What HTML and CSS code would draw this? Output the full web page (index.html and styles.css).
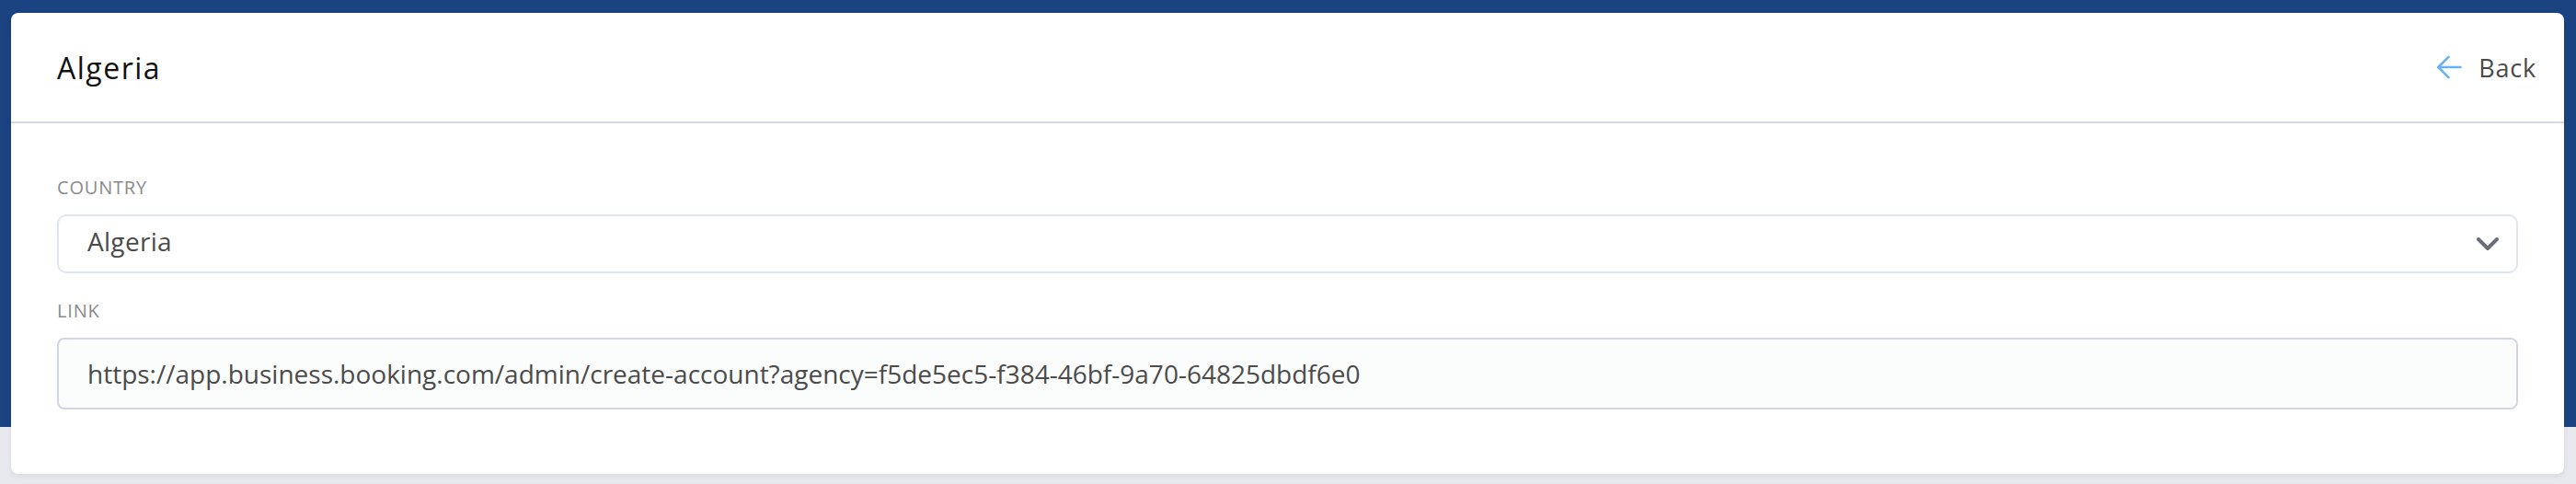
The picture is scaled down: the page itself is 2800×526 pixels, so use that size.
FILE: index.html
```html
<!DOCTYPE html>
<html lang="en">
<head>
<meta charset="utf-8">
<title>Algeria</title>
<link rel="stylesheet" href="styles.css">
</head>
<body>
<div class="page">
  <div class="card">
    <div class="card-header">
      <h1 class="title">Algeria</h1>
      <a class="back" href="#">
        <svg class="back-icon" width="28" height="26" viewBox="0 0 28 26" fill="none" stroke="#68b2f7" stroke-width="2.6" stroke-linecap="round" stroke-linejoin="round"><path d="M26.5 13H2.5M13.5 1.8L2.3 13l11.2 11.2"/></svg>
        <span class="back-text">Back</span>
      </a>
    </div>
    <div class="card-body">
      <div class="field">
        <div class="label">COUNTRY</div>
        <div class="select">
          <span class="select-value">Algeria</span>
          <svg class="chevron" width="26" height="17" viewBox="0 0 26 17" fill="none" stroke="#6b6e76" stroke-width="4" stroke-linecap="round" stroke-linejoin="round"><path d="M3 3l10 10 10-10"/></svg>
        </div>
      </div>
      <div class="field field-link">
        <div class="label">LINK</div>
        <div class="input">https://app.business.booking.com/admin/create-account?agency=f5de5ec5-f384-46bf-9a70-64825dbdf6e0</div>
      </div>
    </div>
  </div>
</div>
</body>
</html>
```

FILE: styles.css
```css
* { box-sizing: border-box; }
html, body { margin: 0; padding: 0; }
body {
  font-family: "Open Sans", "Liberation Sans", sans-serif;
  background: #e8e9ee;
}
.page {
  width: 2800px;
  height: 526px;
  padding: 14px 13px 0 12px;
  background: linear-gradient(to bottom, #1b4381 0, #1b4381 464px, #e8e9ee 464px, #e8e9ee 100%);
}
.card {
  background: #ffffff;
  border-radius: 8px;
  height: 501px;
  box-shadow: 0 2px 6px rgba(20, 30, 60, 0.08);
  display: flex;
  flex-direction: column;
}
.card-header {
  height: 120px;
  border-bottom: 2px solid #d3d9e5;
  display: flex;
  align-items: center;
  justify-content: space-between;
  padding: 0 30px 0 50px;
}
.title {
  margin: 0;
  font-size: 32px;
  font-weight: 400;
  color: #111111;
  letter-spacing: 1.5px;
}
.back {
  display: flex;
  align-items: center;
  gap: 18px;
  text-decoration: none;
  color: #4a4a4a;
}
.back-text {
  font-size: 27px;
  letter-spacing: 0.8px;
}
.card-body {
  padding: 58px 50px 0 50px;
}
.label {
  font-size: 20px;
  line-height: 24px;
  color: #8a8a8a;
  letter-spacing: 0.8px;
}
.select {
  margin-top: 17px;
  height: 64px;
  border: 2px solid #e1e5ef;
  border-radius: 10px;
  display: flex;
  align-items: center;
  justify-content: space-between;
  padding: 0 18px 6px 31px;
}
.select-value {
  font-size: 28px;
  color: #4b4b4b;
  letter-spacing: 0.3px;
}
.chevron {
  margin-top: 6px;
}
.field-link {
  margin-top: 29px;
}
.input {
  margin-top: 17px;
  height: 78px;
  border: 2px solid #d0d7e3;
  border-radius: 8px;
  background: #fbfcfc;
  display: flex;
  align-items: center;
  padding: 0 31px;
  font-size: 28px;
  color: #4b4b4b;
  white-space: nowrap;
}
```
